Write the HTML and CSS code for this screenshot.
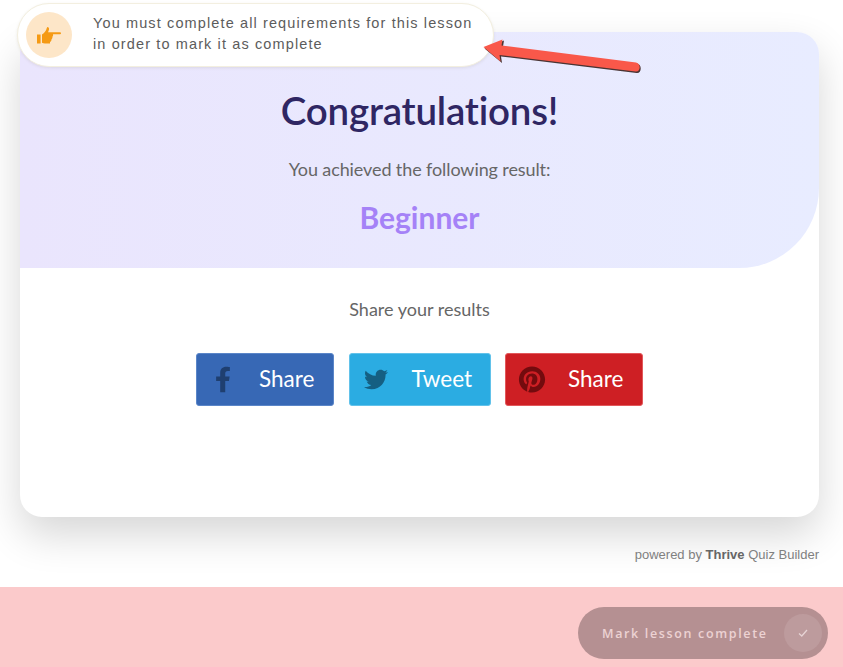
FILE: index.html
```html
<!DOCTYPE html>
<html lang="en">
<head>
    <meta charset="UTF-8">
    <meta name="viewport" content="width=device-width, initial-scale=1.0">
    <title>Quiz result</title>
    <link rel="stylesheet" href="styles.css">
</head>
<body>

    <div class="page">
        <section class="quiz-card">
            <div class="result-top">
                <h1>Congratulations!</h1>
                <p class="result-intro">You achieved the following result:</p>
                <h2>Beginner</h2>
            </div>
            <div class="share">
                <p class="share-title">Share your results</p>
                <div class="share-buttons">
                    <a class="btn btn-fb" href="#">
                        <svg class="btn-icon" viewBox="0 0 320 512"><path d="M279.14 288l14.22-92.66h-88.91v-60.13c0-25.35 12.42-50.06 52.24-50.06h40.42V6.26S260.43 0 225.36 0c-73.22 0-121.08 44.38-121.08 124.72v70.62H22.89V288h81.39v224h100.17V288z"/></svg>
                        <span>Share</span>
                    </a>
                    <a class="btn btn-tw" href="#">
                        <svg class="btn-icon" viewBox="0 0 512 512"><path d="M459.37 151.716c.325 4.548.325 9.097.325 13.645 0 138.72-105.583 298.558-298.558 298.558-59.452 0-114.68-17.219-161.137-47.106 8.447.974 16.568 1.299 25.34 1.299 49.055 0 94.213-16.568 130.274-44.832-46.132-.975-84.792-31.188-98.112-72.772 6.498.974 12.995 1.624 19.818 1.624 9.421 0 18.843-1.3 27.614-3.573-48.081-9.747-84.143-51.98-84.143-102.985v-1.299c13.969 7.797 30.214 12.67 47.431 13.319-28.264-18.843-46.781-51.005-46.781-87.391 0-19.492 5.197-37.36 14.294-52.954 51.655 63.675 129.3 105.258 216.365 109.807-1.624-7.797-2.599-15.918-2.599-24.04 0-57.828 46.782-104.934 104.934-104.934 30.213 0 57.502 12.67 76.67 33.137 23.715-4.548 46.456-13.32 66.599-25.34-7.798 24.366-24.366 44.833-46.132 57.827 21.117-2.273 41.584-8.122 60.426-16.243-14.292 20.791-32.161 39.308-52.628 54.253z"/></svg>
                        <span>Tweet</span>
                    </a>
                    <a class="btn btn-pin" href="#">
                        <svg class="btn-icon" viewBox="0 0 496 512"><path d="M496 256c0 137-111 248-248 248-25.6 0-50.2-3.9-73.4-11.1 10.1-16.5 25.2-43.5 30.8-65 3-11.6 15.4-59 15.4-59 8.1 15.4 31.7 28.5 56.8 28.5 74.8 0 128.7-68.8 128.7-154.3 0-81.9-66.9-143.2-152.9-143.2-107 0-163.9 71.8-163.9 150.1 0 36.4 19.4 81.7 50.3 96.1 4.7 2.2 7.2 1.2 8.3-3.3.8-3.4 5-20.3 6.9-28.1.6-2.5.3-4.7-1.7-7.1-10.1-12.5-18.3-35.3-18.3-56.6 0-54.7 41.4-107.6 112-107.6 60.9 0 103.6 41.5 103.6 100.9 0 67.1-33.9 113.6-78 113.6-24.3 0-42.6-20.1-36.7-44.8 7-29.5 20.5-61.3 20.5-82.6 0-19-10.2-34.9-31.4-34.9-24.9 0-44.9 25.7-44.9 60.2 0 22 7.4 36.8 7.4 36.8s-24.5 103.8-29 123.2c-5 21.4-3 51.6-.9 71.2C65.4 450.9 0 361.1 0 256 0 119 111 8 248 8s248 111 248 248z"/></svg>
                        <span>Share</span>
                    </a>
                </div>
            </div>
        </section>
        <p class="powered">powered by <strong>Thrive</strong> Quiz Builder</p>
    </div>

    <!-- Requirements notice, sits over the card -->
    <div class="notice">
        <div class="notice-icon">
            <svg viewBox="0 0 24 17" width="24" height="17"><path d="M0 7.500h3.600v9H0zM5 7.500C7 6.500 8.500 4.500 9.200 2.800 9.600 1.800 9.800.8 10.300 0 11.600 0 12.300 1 12 2.500 11.800 3.600 11.300 4.500 11 5.200H22.600C23.600 5.200 24 5.700 24 6.200 24 6.800 23.400 7.200 22.600 7.200H16C16.300 8 16 9.300 15.400 9.800 15.600 10.800 15.200 11.700 14.500 12.200 14.600 13.200 14.200 14.500 13 15V16.500H8C6.800 16.500 5.800 16.200 5 15.800Z"/></svg>
        </div>
        <p>You must complete all requirements for this lesson<br>in order to mark it as complete</p>
    </div>

    <svg class="arrow" viewBox="0 0 170 40" width="170" height="40">
        <path class="arrow-shadow" d="M3.500 12.500L23 4.500L22 10.500L156 27.500C161.500 28.500 160.500 38 155.500 37L20 20.500L21 27Z"/>
        <path class="arrow-body" d="M2.500 11L21.500 3.500L20.500 9.500L155 26.500C160.500 27.500 159.500 36.500 154.500 35.500L18.500 19L19.500 25.500Z"/>
    </svg>

    <div class="footer-bar">
        <button class="complete-btn">
            <span>Mark lesson complete</span>
            <span class="complete-check">
                <svg viewBox="0 0 12 12" width="12" height="12"><path d="M2 6.500l2.800 2.500L10 3" fill="none" stroke="#e6d3d4" stroke-width="1.300"/></svg>
            </span>
        </button>
    </div>

</body>
</html>
```

FILE: styles.css
```css
* {
    margin: 0;
    padding: 0;
    box-sizing: border-box;
}

body {
    width: 843px;
    height: 667px;
    overflow: hidden;
    background: #fff;
    font-family: 'Lato', sans-serif;
    position: relative;
}

.page {
    height: 587px;
    padding: 32px 24px 0 20px;
}

.quiz-card {
    height: 485px;
    background: #fff;
    border-radius: 22px;
    box-shadow: 0 18px 40px rgba(0, 0, 0, 0.16);
    text-align: center;
}

.result-top {
    height: 236px;
    padding-top: 53px;
    background: linear-gradient(90deg, #eae5fd, #e8ecff);
    border-radius: 22px 22px 80px 0;
}

.result-top h1 {
    font-size: 38.500px;
    line-height: 50px;
    font-weight: 600;
    letter-spacing: -0.200px;
    color: #2f2663;
}

.result-intro {
    margin-top: 22px;
    font-size: 18px;
    line-height: 24px;
    letter-spacing: -0.100px;
    color: #666;
}

.result-top h2 {
    margin-top: 17px;
    font-size: 30px;
    line-height: 38px;
    font-weight: 700;
    color: #a582f7;
}

.share {
    padding-top: 29px;
}

.share-title {
    font-size: 18px;
    line-height: 24px;
    color: #666;
}

.share-buttons {
    margin-top: 32px;
    display: flex;
    justify-content: center;
    gap: 14.500px;
}

.btn {
    height: 53px;
    display: flex;
    align-items: center;
    border-radius: 3px;
    color: #fff;
    font-size: 22.500px;
    line-height: 50px;
    text-decoration: none;
}

.btn span {
    margin-top: -1px;
}

.btn-fb {
    width: 138px;
    padding-left: 18px;
    background: #3768b5;
    border: 1px solid #5b86c8;
}

.btn-fb .btn-icon {
    width: 16px;
    margin-right: 28px;
    fill: #1f3f70;
}

.btn-tw {
    width: 142px;
    padding-left: 14px;
    background: #2bace2;
    border: 1px solid #62c2ea;
}

.btn-tw .btn-icon {
    width: 24px;
    margin-right: 24px;
    fill: #155f82;
}

.btn-pin {
    width: 138px;
    padding-left: 12px;
    background: #ce1f24;
    border: 1px solid #e2585b;
}

.btn-pin .btn-icon {
    width: 28px;
    margin-right: 22px;
    fill: #730b0e;
}

.btn-icon {
    height: 27px;
}

.powered {
    margin-top: 30px;
    text-align: right;
    font-family: 'Liberation Sans', sans-serif;
    font-size: 13px;
    line-height: 16px;
    color: #808080;
}

.powered strong {
    color: #666;
}

.notice {
    position: absolute;
    top: 3px;
    left: 17px;
    width: 477px;
    height: 64px;
    display: flex;
    align-items: center;
    padding-left: 8px;
    gap: 21px;
    background: #fff;
    border: 1px solid #f3efe0;
    border-radius: 32px;
    box-shadow: 0 1px 3px rgba(120, 110, 60, 0.12);
}

.notice-icon {
    width: 46px;
    height: 46px;
    flex-shrink: 0;
    display: flex;
    align-items: center;
    justify-content: center;
    border-radius: 50%;
    background: #fde6c8;
    fill: #f59a14;
}

.notice p {
    margin-top: -3px;
    font-family: 'Liberation Sans', sans-serif;
    font-size: 14.500px;
    line-height: 21px;
    letter-spacing: 1.120px;
    color: #5c5c5c;
}

.arrow {
    position: absolute;
    top: 36px;
    left: 481px;
}

.arrow-shadow {
    fill: #4a3434;
}

.arrow-body {
    fill: #f9584a;
}

.footer-bar {
    height: 80px;
    display: flex;
    justify-content: flex-end;
    padding: 20px 15px 0 0;
    background: #fbcacb;
}

.complete-btn {
    width: 250px;
    height: 52px;
    display: flex;
    align-items: center;
    justify-content: space-between;
    padding: 0 6px 0 24px;
    border: none;
    border-radius: 26px;
    background: #b59092;
    color: #ecd2d3;
    font-family: 'Open Sans', sans-serif;
    font-size: 12.500px;
    font-weight: 600;
    letter-spacing: 1.650px;
}

.complete-check {
    width: 38px;
    height: 38px;
    display: flex;
    align-items: center;
    justify-content: center;
    border-radius: 50%;
    background: #bd9b9d;
}
```
